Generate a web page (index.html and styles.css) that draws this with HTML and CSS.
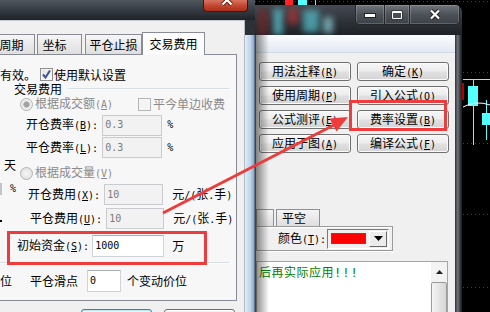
FILE: index.html
```html
<!DOCTYPE html>
<html lang="zh-CN">

<head>
    <meta charset="UTF-8">
    <meta name="viewport" content="width=device-width, initial-scale=1.0">
    <title>交易费用设置</title>
    <link rel="stylesheet" href="styles.css">
</head>

<body>
    <div class="desktop">
        <!-- quote chart behind the windows -->
        <svg class="chart" width="490" height="312" viewBox="0 0 490 312">
            <rect width="490" height="312" fill="#000"/>
            <line x1="255" y1="1.5" x2="490" y2="1.5" stroke="#d00" stroke-dasharray="1 3"/>
            <rect x="285" y="0" width="8" height="5" fill="#ff2424"/>
            <rect x="298" y="0" width="9" height="5" fill="#54ffff"/>
            <line x1="315.5" y1="0" x2="315.5" y2="5" stroke="#54ffff"/>
            <g stroke="#d00" stroke-dasharray="1 3">
                <line x1="463" y1="72.5" x2="490" y2="72.5"/>
                <line x1="463" y1="143.5" x2="490" y2="143.5"/>
                <line x1="463" y1="214.5" x2="490" y2="214.5"/>
                <line x1="463" y1="287.5" x2="490" y2="287.5"/>
            </g>
            <line x1="463" y1="79.5" x2="490" y2="79.5" stroke="#e8e800"/>
            <rect x="462" y="83" width="2" height="17" fill="#b00000"/>
            <line x1="473.5" y1="80" x2="473.5" y2="145" stroke="#54ffff"/>
            <rect x="468" y="86" width="10" height="20" fill="#54ffff"/>
            <line x1="486.5" y1="100" x2="486.5" y2="140" stroke="#54ffff"/>
            <rect x="482" y="113" width="9" height="12" fill="#54ffff"/>
            <path d="M463 107 Q476 100 490 105" stroke="#fff" fill="none"/>
        </svg>

        <!-- formula editor window (behind) -->
        <div class="win editor">
            <div class="editor-glass">
                <span class="ghost g1"></span>
                <span class="ghost g2"></span>
                <span class="ghost g3"></span>
                <span class="ghost g4"></span>
                <span class="ghost g5"></span>
                <div class="caption-btns">
                    <span class="cap cap-min">
                        <svg width="12" height="6" viewBox="0 0 12 6"><rect x="0.5" y="1.5" width="11" height="4" fill="#fff" stroke="#222"/></svg>
                    </span>
                    <span class="cap cap-max">
                        <svg width="12" height="10" viewBox="0 0 12 10"><rect x="0.5" y="0.5" width="11" height="9" fill="#222"/><rect x="2" y="3" width="8" height="5" fill="#494e55"/><path d="M1.5 1.5h9v7h-9z M1.5 2.5h9" fill="none" stroke="#fff"/></svg>
                    </span>
                    <span class="cap cap-close">
                        <svg width="12" height="11" viewBox="0 0 12 11"><path d="M2 1.5l8 8M10 1.5l-8 8" stroke="#222" stroke-width="4"/><path d="M2 1.5l8 8M10 1.5l-8 8" stroke="#fff" stroke-width="2.2"/></svg>
                    </span>
                </div>
            </div>
            <div class="editor-frame">
                <div class="editor-client">
                    <div class="band"></div>
                    <div class="cmd-grid">
                        <button class="cmd">用法注释<span class="acc">(<u>R</u>)</span></button>
                        <button class="cmd">确定<span class="acc">(<u>K</u>)</span></button>
                        <button class="cmd">使用周期<span class="acc">(<u>P</u>)</span></button>
                        <button class="cmd">引入公式<span class="acc">(<u>O</u>)</span></button>
                        <button class="cmd">公式测评<span class="acc">(<u>E</u>)</span></button>
                        <button class="cmd">费率设置<span class="acc">(<u>B</u>)</span></button>
                        <button class="cmd">应用于图<span class="acc">(<u>A</u>)</span></button>
                        <button class="cmd">编译公式<span class="acc">(<u>F</u>)</span></button>
                    </div>
                    <div class="line-tabs">
                        <span class="ltab ltab-cut"></span>
                        <span class="ltab ltab-name">平空</span>
                    </div>
                    <div class="color-box">
                        <span>颜色<span class="acc">(<u>T</u>):</span></span>
                        <span class="color-combo">
                            <span class="swatch"></span>
                            <span class="drop">
                                <svg width="9" height="5" viewBox="0 0 9 5"><path d="M0 0h9L4.5 5z" fill="#000"/></svg>
                            </span>
                        </span>
                    </div>
                    <div class="source">
                        <div class="source-text">后再实际应用<span class="bang">!!!</span></div>
                        <div class="vscroll">
                            <span class="sb-up">
                                <svg width="7" height="4" viewBox="0 0 7 4"><path d="M0 4h7L3.5 0z" fill="#222"/></svg>
                            </span>
                            <span class="sb-thumb"><span class="grip"></span></span>
                        </div>
                    </div>
                </div>
                <div class="edge-r"></div>
            </div>
        </div>

        <!-- system parameter dialog (front) -->
        <div class="win params">
            <div class="params-title">
                <span class="close-x">
                    <svg width="12" height="12" viewBox="0 0 12 12"><path d="M1.5 1.5l9 9M10.5 1.5l-9 9" stroke="#5a1a10" stroke-width="4"/><path d="M1.5 1.5l9 9M10.5 1.5l-9 9" stroke="#fff" stroke-width="2.2"/></svg>
                </span>
            </div>
            <div class="params-frame">
                <div class="params-client">
                    <div class="tabs">
                        <span class="tab tab-period">周期</span>
                        <span class="tab tab-axis">坐标</span>
                        <span class="tab tab-stop">平仓止损</span>
                        <span class="tab tab-fee active">交易费用</span>
                    </div>
                    <div class="tab-page">
                        <div class="row row-default">
                            <span>有效。</span>
                            <span class="check">
                                <svg width="11" height="11" viewBox="0 0 11 11"><path d="M2 5.5l2.5 3L9 1.5" fill="none" stroke="#3b5597" stroke-width="2"/></svg>
                            </span>
                            <span class="check-label">使用默认设置</span>
                        </div>
                        <div class="group">
                            <div class="group-title"><span>交易费用</span><i class="etch"></i></div>
                            <div class="row row-amount">
                                <span class="radio on"></span>
                                <span class="dim opt">根据成交额<span class="acc">(<u>A</u>)</span></span>
                                <span class="check off"></span>
                                <span class="dim check-label">平今单边收费</span>
                            </div>
                            <div class="row row-rate">
                                <span>开仓费率<span class="acc">(<u>B</u>):</span></span>
                                <span class="edit off w-rate">0.3</span>
                                <span class="acc unit-pct">%</span>
                            </div>
                            <div class="row row-rate row-rate2">
                                <span>平仓费率<span class="acc">(<u>L</u>):</span></span>
                                <span class="edit off w-rate">0.3</span>
                                <span class="acc unit-pct">%</span>
                            </div>
                            <div class="row row-vol">
                                <span class="stub">天</span>
                                <span class="vol-opt">
                                    <span class="radio"></span>
                                    <span class="dim opt">根据成交量<span class="acc">(<u>V</u>)</span></span>
                                </span>
                            </div>
                            <div class="row row-fee">
                                <span class="stub stub-pct"><i class="cut-edit"></i><span class="acc">%</span></span>
                                <span class="fee-open">开仓费用<span class="acc">(<u>X</u>):</span></span>
                                <span class="edit off w-fee">10</span>
                                <span class="unit">元<span class="acc">/(</span>张<span class="acc">.</span>手<span class="acc">)</span></span>
                            </div>
                            <div class="row row-fee">
                                <span class="stub"><i class="dot"></i></span>
                                <span class="fee-close">平仓费用<span class="acc">(<u>U</u>):</span></span>
                                <span class="edit off w-fee2">10</span>
                                <span class="unit">元<span class="acc">/(</span>张<span class="acc">.</span>手<span class="acc">)</span></span>
                            </div>
                            <div class="row row-capital">
                                <span>初始资金<span class="acc">(<u>S</u>):</span></span>
                                <span class="edit w-capital">1000</span>
                                <span class="unit">万</span>
                            </div>
                        </div>
                        <div class="row row-slip">
                            <span class="stub-cut">位</span>
                            <span class="slip-label">平仓滑点</span>
                            <span class="edit w-slip">0</span>
                            <span class="slip-unit">个变动价位</span>
                        </div>
                    </div>
                    <div class="dlg-btns">
                        <span class="dbtn dbtn-default"></span>
                        <span class="dbtn"></span>
                    </div>
                </div>
                <div class="glass-edge"></div>
            </div>
        </div>

        <!-- red annotations -->
        <div class="mark mark-capital"></div>
        <div class="mark mark-rate"></div>
        <svg class="arrow" width="490" height="312" viewBox="0 0 490 312">
            <line x1="163" y1="213" x2="334" y2="125" stroke="#ee3b3b" stroke-width="3"/>
            <polygon points="348,117 329.5,118.5 336.5,131.5" fill="#ee3b3b"/>
        </svg>
    </div>
</body>

</html>
```

FILE: styles.css
```css
* {
    box-sizing: border-box;
}

body {
    margin: 0;
    background: #000;
    font-family: "Noto Sans CJK SC", "Liberation Sans", sans-serif;
    font-size: 12px;
    line-height: 14px;
    color: #000;
}

.desktop {
    position: relative;
    width: 490px;
    height: 312px;
    overflow: hidden;
}

.chart {
    position: absolute;
    left: 0;
    top: 0;
}

/* half-width letters like (A) */
.acc {
    font-family: "DejaVu Sans Mono", "Liberation Mono", monospace;
    font-size: 10px;
}

.dim {
    color: #8a8a8a;
}

/* ---------- formula editor window (behind) ---------- */
.editor {
    position: absolute;
    left: 255px;
    top: 5px;
    width: 207px;
    height: 320px;
    display: flex;
    flex-direction: column;
}

.editor-glass {
    position: relative;
    flex-shrink: 0;
    height: 30px;
    background: linear-gradient(#454b52, #2b3036 60%, #1e2227);
    border-top-right-radius: 7px;
    overflow: hidden;
}

.ghost {
    position: absolute;
    filter: blur(3px);
    opacity: 0.7;
}

.g1 { left: 18px; top: 4px; width: 10px; height: 26px; background: #5fc8d4; }
.g2 { left: 33px; top: 3px; width: 10px; height: 16px; background: #b83232; }
.g3 { left: 48px; top: 5px; width: 16px; height: 22px; background: #57c2cf; }
.g4 { left: 68px; top: 12px; width: 10px; height: 16px; background: #8fd3da; }
.g5 { left: 2px; top: 4px; width: 12px; height: 26px; background: #6e2b2b; }

.caption-btns {
    position: absolute;
    top: 0;
    right: 2px;
    display: flex;
    height: 20px;
    border: 1px solid #24282c;
    border-top: none;
    border-radius: 0 0 5px 5px;
    overflow: hidden;
}

.cap {
    display: flex;
    align-items: center;
    justify-content: center;
    height: 100%;
    background: linear-gradient(#70757c, #4d5259 50%, #3c4147);
    box-shadow: inset 0 0 0 1px rgba(255, 255, 255, 0.18);
}

.cap + .cap {
    border-left: 1px solid #24282c;
}

.cap-min { width: 28px; }
.cap-max { width: 25px; }
.cap-close { width: 50px; }

.editor-frame {
    flex: 1;
    display: flex;
    min-height: 0;
    overflow: hidden;
}

.editor-client {
    position: relative;
    width: 200px;
    background: #f0f0f0;
    border-left: 1px solid #3d444b;
}

/* shadow thrown by the front dialog */
.editor-client::after {
    content: "";
    position: absolute;
    left: 0;
    top: 0;
    bottom: 0;
    width: 13px;
    background: linear-gradient(to right, rgba(40, 40, 40, 0.55), rgba(40, 40, 40, 0));
}

.edge-r {
    width: 7px;
    background: linear-gradient(to right, #2d3237, #6f767d 40%, #3a3f44 70%, #1a1d20);
}

.band {
    height: 18px;
    background: linear-gradient(#fbfcfe, #e2e9f2);
    border-bottom: 1px solid #d3dae4;
}

.cmd-grid {
    display: grid;
    grid-template-columns: 92px 92px;
    column-gap: 6px;
    row-gap: 5px;
    margin: 9px 0 0 3px;
}

.cmd {
    height: 19px;
    padding: 0;
    border: 1px solid #707070;
    border-radius: 3px;
    background: linear-gradient(#f7f7f7, #ededed 45%, #e0e0e0 55%, #d4d4d4);
    box-shadow: inset 0 0 0 1px #fbfbfb;
    font: inherit;
    color: #000;
}

.line-tabs {
    display: flex;
    align-items: flex-end;
    gap: 2px;
    height: 17px;
    margin-top: 56px;
}

.ltab {
    height: 17px;
    border: 1px solid #8d9096;
    border-bottom: none;
    background: linear-gradient(#f4f4f4, #dedede);
    padding: 1px 0 0 5px;
}

.ltab-cut { width: 18px; }
.ltab-name { width: 44px; }

.color-box {
    display: flex;
    align-items: center;
    width: 137px;
    height: 25px;
    padding-left: 21px;
    border: 1px solid #9a9a9a;
    box-shadow: 0 1px 0 #fff, inset 0 1px 0 #fff;
}

.color-combo {
    display: flex;
    align-items: center;
    width: 62px;
    height: 20px;
    margin-left: 1px;
    border: 1px solid;
    border-color: #7a7a7a #fff #fff #7a7a7a;
    background: #f0f0f0;
}

.swatch {
    width: 35px;
    height: 11px;
    margin-left: 3px;
    background: #ff0000;
    border: 1px solid #555;
}

.drop {
    display: flex;
    align-items: center;
    justify-content: center;
    width: 18px;
    height: 16px;
    margin-left: auto;
    margin-right: 1px;
    border: 1px solid;
    border-color: #fff #6a6a6a #6a6a6a #fff;
    background: #ececec;
}

.source {
    display: flex;
    width: 192px;
    height: 60px;
    margin-top: 10px;
    border: 1px solid #a5a5a5;
    background: #fff;
}

.source-text {
    flex: 1;
    padding: 3px 0 0 2px;
    color: #008000;
    letter-spacing: 0.5px;
}

.bang {
    font-family: "DejaVu Sans Mono", monospace;
    font-size: 12px;
    letter-spacing: 1px;
}

.vscroll {
    display: flex;
    flex-direction: column;
    gap: 2px;
    width: 16px;
    padding: 1px 0;
    background: #f2f2f2;
}

.sb-up {
    display: flex;
    align-items: center;
    justify-content: center;
    height: 17px;
    background: #f3f3f3;
}

.sb-thumb {
    flex: 1;
    display: flex;
    align-items: flex-end;
    justify-content: center;
    border: 1px solid #9a9a9a;
    border-radius: 2px;
    background: linear-gradient(to right, #f4f4f4, #d6d6d6);
}

.grip {
    width: 7px;
    height: 8px;
    margin-bottom: -2px;
    background: repeating-linear-gradient(#555 0 1px, #eee 1px 2px);
}

/* ---------- system parameter dialog (front) ---------- */
.params {
    position: absolute;
    left: 0;
    top: 0;
    width: 255px;
    height: 312px;
    display: flex;
    flex-direction: column;
}

.params-title {
    position: relative;
    flex-shrink: 0;
    height: 20px;
    background: linear-gradient(#4f565e, #383e45 45%, #1f2328);
}

.close-x {
    position: absolute;
    right: 7px;
    top: 0;
    display: flex;
    justify-content: center;
    width: 45px;
    height: 12px;
    padding-left: 3px;
    border: 1px solid #4a1208;
    border-top: none;
    border-radius: 0 0 4px 4px;
    background: linear-gradient(#d8735f, #c2452e 55%, #a8301d);
    overflow: hidden;
}

.close-x svg {
    margin-top: -6px;
}

.params-frame {
    flex: 1;
    display: flex;
    min-height: 0;
    overflow: hidden;
}

.params-client {
    width: 245px;
    background: #f0f0f0;
    border-top: 1px solid #c5ccd3;
    border-right: 1px solid #b3bbc3;
    overflow: hidden;
}

.glass-edge {
    width: 10px;
    background:
        linear-gradient(#2b3137 0 15px, transparent 15px),
        linear-gradient(to right, #e2ecf6, #bcd4ec 55%, #8fb0d1 85%, #4a5560);
}

.tabs {
    position: relative;
    z-index: 1;
    display: flex;
    align-items: flex-end;
    height: 22px;
    margin: 11px 0 0 -12px;
}

.tab {
    flex-shrink: 0;
    height: 20px;
    margin-right: 2px;
    padding-top: 3px;
    border: 1px solid #898c95;
    border-bottom: none;
    background: linear-gradient(#f6f6f6, #dedede);
    text-align: center;
}

.tab-period { width: 47px; }
.tab-axis { width: 45px; padding-right: 10px; }
.tab-stop { width: 57px; margin-left: 1px; }

.tab.active {
    width: 63px;
    height: 23px;
    margin: 0 0 -1px -2px;
    padding-top: 4px;
    background: #fcfcfc;
}

.tab-page {
    width: 249px;
    height: 247px;
    margin-left: -12px;
    padding: 12px 0 0 11px;
    border: 1px solid #898c95;
    background: #f7f7f7;
}

.row {
    display: flex;
    align-items: center;
    white-space: nowrap;
}

.check {
    display: flex;
    align-items: center;
    justify-content: center;
    flex-shrink: 0;
    width: 13px;
    height: 13px;
    border: 1px solid #8f8f8f;
    background: linear-gradient(135deg, #dedede, #fff);
    box-shadow: inset 0 0 0 1px #f6f6f6;
}

.check.off {
    border-color: #b5b5b5;
    background: #f4f4f4;
}

.check-label {
    margin-left: 1px;
}

.radio {
    flex-shrink: 0;
    width: 13px;
    height: 13px;
    border-radius: 50%;
    border: 1px solid #b3b3b3;
    background: radial-gradient(circle, #f7f7f7, #dcdcdc);
}

.radio.on {
    background: radial-gradient(circle, #a2a2a2 0 2.5px, #e6e6e6 3.5px, #f7f7f7 6px);
}

.opt {
    margin-left: 2px;
}

.row-default {
    height: 15px;
}

.row-default .check {
    margin-left: 4px;
}

.group {
    margin-right: 7px;
    padding-bottom: 4px;
    border-bottom: 1px solid #d5dfe5;
    box-shadow: 0 1px 0 #fff;
}

.group-title {
    display: flex;
    align-items: center;
    height: 14px;
    padding-left: 14px;
}

.etch {
    flex: 1;
    height: 2px;
    margin-left: 6px;
    border-top: 1px solid #d5dfe5;
    border-bottom: 1px solid #fff;
}

.row-amount {
    height: 14px;
    margin-top: 1px;
    padding-left: 20px;
}

.row-amount .check {
    margin-left: 25px;
}

.row-amount .check-label {
    margin-left: 2px;
}

.edit {
    display: flex;
    align-items: center;
    flex-shrink: 0;
    height: 21px;
    padding: 0 2px;
    border: 1px solid #d0d3d7;
    border-top-color: #abadb3;
    background: #fff;
    font-family: "DejaVu Sans Mono", "Liberation Mono", monospace;
    font-size: 10px;
}

.edit.off {
    border-color: #c9cbce;
    background: #f2f2f2;
    color: #7b7b7b;
}

.row-rate {
    height: 22px;
    margin-top: 3px;
    padding-left: 26px;
}

.row-rate2 {
    height: 21px;
    margin-top: 1px;
}

.row-rate .edit {
    margin-left: 4px;
}

.w-rate { width: 60px; }

.unit-pct {
    margin-left: 5px;
}

.stub {
    display: flex;
    flex-shrink: 0;
    width: 20px;
    padding-left: 4px;
}

.row-vol {
    height: 24px;
    align-items: flex-start;
}

.vol-opt {
    display: flex;
    align-items: center;
    margin-top: 7px;
}

.row-fee {
    height: 23px;
    margin-top: 1px;
}

.stub-pct {
    align-items: flex-start;
    align-self: flex-start;
    padding-left: 0;
}

.cut-edit {
    width: 2px;
    height: 12px;
    background: #c4c4c4;
}

.stub-pct .acc {
    margin-left: 8px;
    line-height: 12px;
}

.dot {
    width: 2px;
    height: 2px;
    margin: 4px 0 0 -4px;
    background: #000;
}

.fee-open {
    margin-left: 8px;
}

.fee-close {
    margin-left: 10px;
}

.row-fee .edit {
    margin-left: 4px;
}

.w-fee { width: 59px; }
.w-fee2 { width: 58px; }

.unit {
    margin-left: 9px;
}

.row-capital {
    height: 24px;
    margin-top: 4px;
    padding-left: 17px;
}

.row-capital .edit {
    height: 22px;
    margin-left: 3px;
}

.row-capital .unit {
    margin-left: 8px;
}

.w-capital { width: 72px; }

.row-slip {
    height: 24px;
    margin-top: 6px;
}

.slip-label {
    margin-left: 18px;
}

.row-slip .edit {
    height: 22px;
    margin-left: 9px;
}

.w-slip { width: 34px; }

.slip-unit {
    margin-left: 6px;
}

.dlg-btns {
    display: flex;
    gap: 12px;
    margin: 8px 0 0 81px;
}

.dbtn {
    flex-shrink: 0;
    width: 71px;
    height: 20px;
    border: 1px solid #707070;
    border-radius: 3px;
    background: linear-gradient(#f4f4f4, #e8e8e8);
    box-shadow: inset 0 0 0 1px #fcfcfc;
}

.dbtn-default {
    border-color: #3c7fb1;
    background: linear-gradient(#eaf6fd, #d9f0fc);
    box-shadow: inset 0 0 0 1px #bfe6f8;
}

/* ---------- red annotations ---------- */
.mark {
    position: absolute;
    border: 3px solid #ee3b3b;
}

.mark-capital {
    left: 7px;
    top: 231px;
    width: 200px;
    height: 34px;
}

.mark-rate {
    left: 349px;
    top: 100px;
    width: 98px;
    height: 31px;
}

.arrow {
    position: absolute;
    left: 0;
    top: 0;
    pointer-events: none;
}
```
